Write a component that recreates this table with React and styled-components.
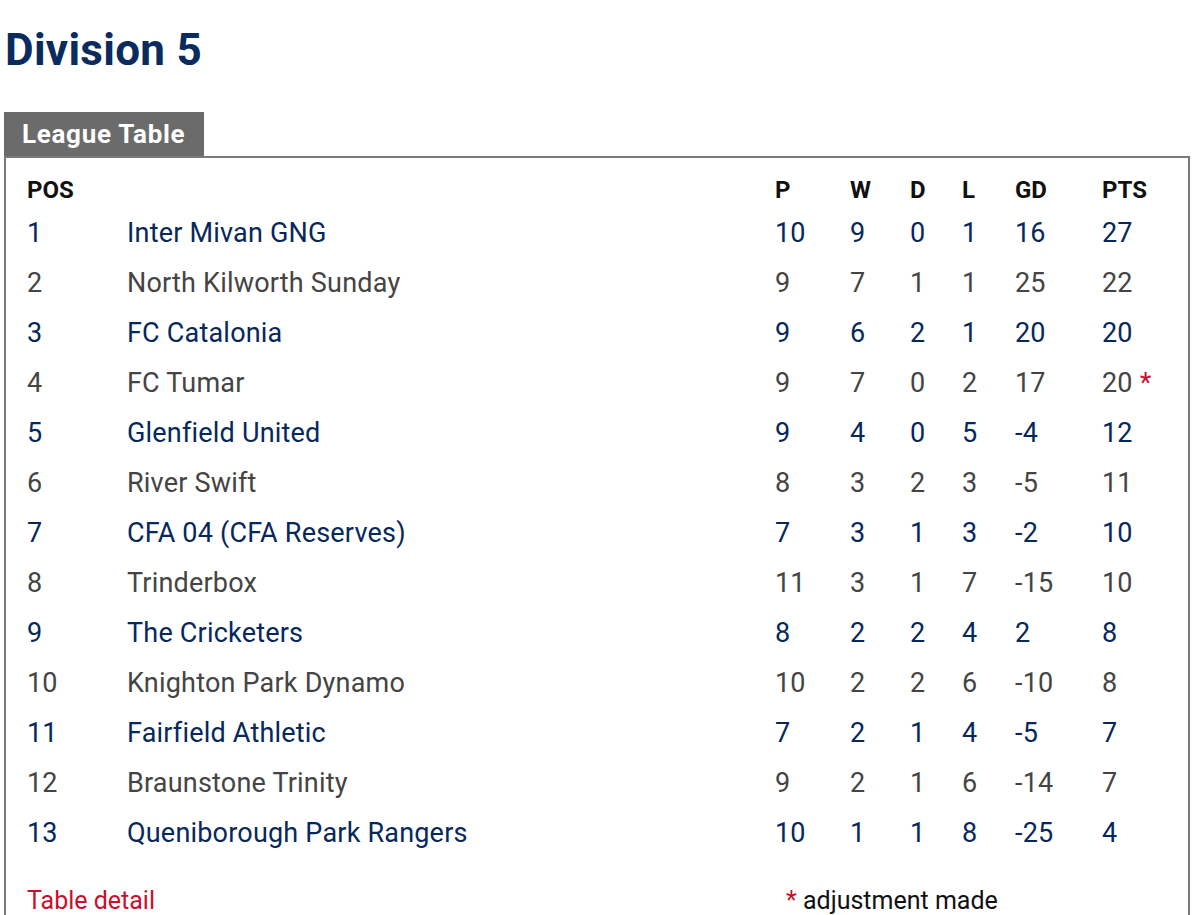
import React from "react";
import styled, { createGlobalStyle } from "styled-components";

const Global = createGlobalStyle`
  html, body { margin: 0; padding: 0; background: #fff; }
  body { font-family: Roboto, "Liberation Sans", Arial, sans-serif; }
`;

const Page = styled.div`
  padding: 24px 0 0 0;
  width: 1200px;
`;

const Title = styled.h1`
  margin: 0 0 36px 5px;
  font-size: 44px;
  line-height: 52px;
  font-weight: 700;
  letter-spacing: 0.3px;
  color: #0a2b5e;
`;

const Tab = styled.div`
  margin-left: 4px;
  width: 200px;
  height: 44px;
  box-sizing: border-box;
  padding-left: 18px;
  background: #6b6b6b;
  color: #fff;
  font-size: 26px;
  line-height: 44px;
  font-weight: 700;
  letter-spacing: 0.7px;
`;

const Panel = styled.div`
  margin-left: 4px;
  width: 1186px;
  box-sizing: border-box;
  border: 2px solid #7a7a7a;
  border-bottom: none;
  padding: 15px 0 40px 21px;
`;

const cols = "100px 648px 75px 60px 52px 53px 87px 1fr";

const HeadRow = styled.div`
  display: grid;
  grid-template-columns: ${cols};
  height: 35px;
  line-height: 35px;
  font-size: 24px;
  font-weight: 700;
  color: #111;
`;

const Row = styled.div`
  display: grid;
  grid-template-columns: ${cols};
  height: 50px;
  line-height: 50px;
  font-size: 27px;
  letter-spacing: 0.2px;
  color: ${(p) => (p.$link ? "#06285c" : "#444")};
`;

const Cell = styled.span`
  white-space: nowrap;
`;

const Star = styled.span`
  color: #c8102e;
`;

const Footer = styled.div`
  display: grid;
  grid-template-columns: 759px 1fr;
  margin-top: 27px;
  font-size: 25px;
  line-height: 32px;
`;

const DetailLink = styled.span`
  color: #c8102e;
`;

const Note = styled.span`
  color: #111;
`;

const data = [
  [1, "Inter Mivan GNG", 10, 9, 0, 1, 16, 27],
  [2, "North Kilworth Sunday", 9, 7, 1, 1, 25, 22],
  [3, "FC Catalonia", 9, 6, 2, 1, 20, 20],
  [4, "FC Tumar", 9, 7, 0, 2, 17, 20, true],
  [5, "Glenfield United", 9, 4, 0, 5, -4, 12],
  [6, "River Swift", 8, 3, 2, 3, -5, 11],
  [7, "CFA 04 (CFA Reserves)", 7, 3, 1, 3, -2, 10],
  [8, "Trinderbox", 11, 3, 1, 7, -15, 10],
  [9, "The Cricketers", 8, 2, 2, 4, 2, 8],
  [10, "Knighton Park Dynamo", 10, 2, 2, 6, -10, 8],
  [11, "Fairfield Athletic", 7, 2, 1, 4, -5, 7],
  [12, "Braunstone Trinity", 9, 2, 1, 6, -14, 7],
  [13, "Queniborough Park Rangers", 10, 1, 1, 8, -25, 4],
];

export default function App() {
  return (
    <Page>
      <Global />
      <Title>Division 5</Title>
      <Tab>League Table</Tab>
      <Panel>
        <HeadRow>
          <Cell>POS</Cell>
          <Cell></Cell>
          <Cell>P</Cell>
          <Cell>W</Cell>
          <Cell>D</Cell>
          <Cell>L</Cell>
          <Cell>GD</Cell>
          <Cell>PTS</Cell>
        </HeadRow>
        {data.map(([pos, team, p, w, d, l, gd, pts, adj]) => (
          <Row key={pos} $link={pos % 2 === 1}>
            <Cell>{pos}</Cell>
            <Cell>{team}</Cell>
            <Cell>{p}</Cell>
            <Cell>{w}</Cell>
            <Cell>{d}</Cell>
            <Cell>{l}</Cell>
            <Cell>{gd}</Cell>
            <Cell>
              {pts}
              {adj && <Star> *</Star>}
            </Cell>
          </Row>
        ))}
        <Footer>
          <DetailLink>Table detail</DetailLink>
          <Note>
            <Star>*</Star> adjustment made
          </Note>
        </Footer>
      </Panel>
    </Page>
  );
}
